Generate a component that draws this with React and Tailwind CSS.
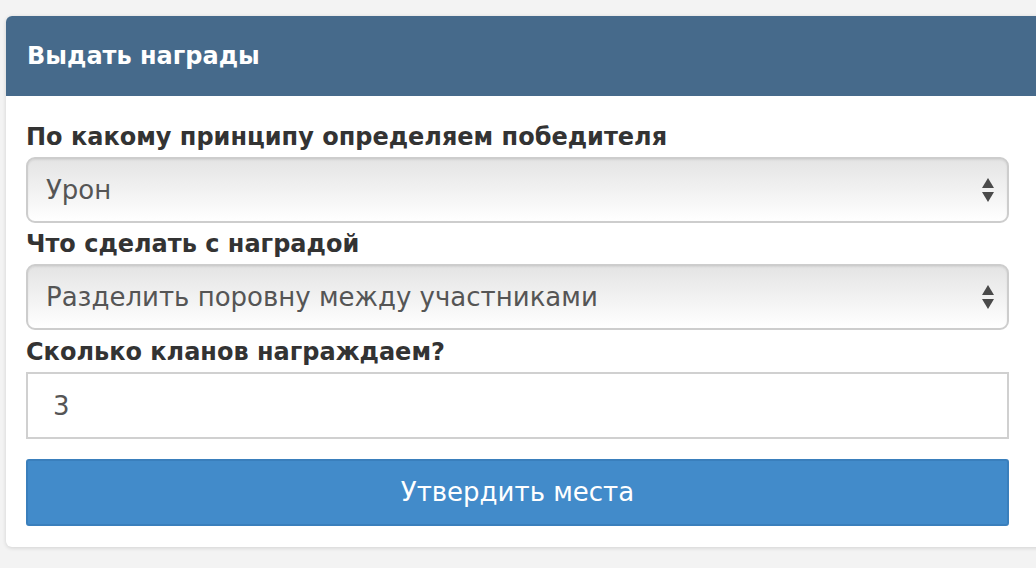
import React, { useState } from "react";

const Arrows = () => (
  <svg width="14" height="26" viewBox="0 0 14 26" className="absolute right-[14px] top-1/2 -translate-y-1/2">
    <path d="M7 1 L13 11 L1 11 Z" fill="#4a4a4a" />
    <path d="M1 15 L13 15 L7 25 Z" fill="#4a4a4a" />
  </svg>
);

const Select = ({ value, options, onChange }) => (
  <div className="relative">
    <select
      value={value}
      onChange={onChange}
      className="appearance-none block w-full h-[66px] pl-[18px] pr-12 rounded-[9px] border-2 border-[#cdcdcd] bg-gradient-to-b from-[#e4e4e4] to-[#ffffff] text-[26px] text-[#555] shadow-[inset_0_1px_2px_rgba(0,0,0,0.08)] outline-none"
    >
      {options.map((o) => (
        <option key={o}>{o}</option>
      ))}
    </select>
    <Arrows />
  </div>
);

const App = () => {
  const [rule, setRule] = useState("Урон");
  const [mode, setMode] = useState("Разделить поровну между участниками");
  const [count, setCount] = useState("3");

  return (
    <div className="min-h-screen w-full overflow-hidden bg-[#f3f3f3] pt-[16px] font-['DejaVu_Sans',sans-serif]">
      {/* card */}
      <div className="ml-[6px] w-[1060px] bg-white rounded-[6px] shadow-[0_1px_4px_rgba(0,0,0,0.14)]">
        <div className="h-[80px] flex items-center pl-[21px] bg-[#466a8b] rounded-t-[6px]">
          <h1 className="text-[24px] font-bold text-white">Выдать награды</h1>
        </div>
        <form className="w-[1024px] pl-[20px] pr-[21px] pt-[26px] pb-[21px]" onSubmit={(e) => e.preventDefault()}>
          <label className="block text-[24px] leading-[30px] font-bold text-[#333] mb-[5px]">
            По какому принципу определяем победителя
          </label>
          <Select value={rule} options={["Урон", "Очки", "Убийства"]} onChange={(e) => setRule(e.target.value)} />
          <label className="block mt-[6px] text-[24px] leading-[30px] font-bold text-[#333] mb-[5px]">
            Что сделать с наградой
          </label>
          <Select
            value={mode}
            options={["Разделить поровну между участниками", "Отдать лидеру клана"]}
            onChange={(e) => setMode(e.target.value)}
          />
          <label className="block mt-[7px] text-[24px] leading-[30px] font-bold text-[#333] mb-[5px]">
            Сколько кланов награждаем?
          </label>
          <input
            type="text"
            value={count}
            onChange={(e) => setCount(e.target.value)}
            className="block w-full h-[67px] px-[25px] border-2 border-[#d0d0d0] text-[26px] text-[#555] outline-none"
          />
          {/* submit */}
          <button
            type="submit"
            className="mt-[20px] block w-full h-[67px] bg-[#428bca] border-2 border-[#3a7fbc] rounded-[3px] text-white text-[26px]"
          >
            Утвердить места
          </button>
        </form>
      </div>
    </div>
  );
};

export default App;
